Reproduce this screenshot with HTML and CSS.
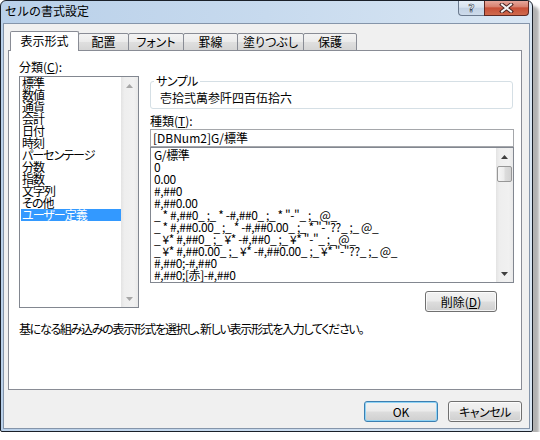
FILE: index.html
```html
<!DOCTYPE html>
<html lang="ja">
<head>
<meta charset="utf-8">
<title>セルの書式設定</title>
<link rel="stylesheet" href="styles.css">
</head>
<body>
<div class="window">
  <div class="titlebar">
    <div class="title">セルの書式設定</div>
    <div class="caption">
      <div class="cap help"><span>?</span></div>
      <div class="cap close">
        <svg width="15" height="10" viewBox="0 0 15 10"><path d="M3 1.5 L12 8.5 M12 1.5 L3 8.5" stroke="#4a2320" stroke-width="4" stroke-linecap="square"/><path d="M3 1.5 L12 8.5 M12 1.5 L3 8.5" stroke="#f4f4f4" stroke-width="2" stroke-linecap="square"/></svg>
      </div>
    </div>
  </div>
  <div class="client">
    <div class="tabs">
      <div class="tab sel">表示形式</div>
      <div class="tab t-haichi">配置</div>
      <div class="tab t-font">フォント</div>
      <div class="tab t-keisen">罫線</div>
      <div class="tab t-nuri">塗りつぶし</div>
      <div class="tab t-hogo">保護</div>
    </div>
    <div class="panel">
      <div class="main">
        <div class="left">
          <div class="label">分類(<u>C</u>):</div>
          <div class="listbox cat">
            <div class="items">
              <div class="item">標準</div>
              <div class="item">数値</div>
              <div class="item">通貨</div>
              <div class="item">会計</div>
              <div class="item">日付</div>
              <div class="item">時刻</div>
              <div class="item">パーセンテージ</div>
              <div class="item">分数</div>
              <div class="item">指数</div>
              <div class="item">文字列</div>
              <div class="item">その他</div>
              <div class="item selected">ユーザー定義</div>
            </div>
            <div class="vscroll disabled">
              <div class="arrow"><svg width="7" height="4" viewBox="0 0 7 4"><polygon points="3.5,0 7,4 0,4"/></svg></div>
              <div class="track"></div>
              <div class="arrow"><svg width="7" height="4" viewBox="0 0 7 4"><polygon points="0,0 7,0 3.5,4"/></svg></div>
            </div>
          </div>
        </div>
        <div class="right">
          <fieldset class="group">
            <legend>サンプル</legend>
            <div class="sample">壱拾弐萬参阡四百伍拾六</div>
          </fieldset>
          <div class="label type-label">種類(<u>T</u>):</div>
          <div class="input">[DBNum2]G/標準</div>
          <div class="listbox fmt">
            <div class="items">
              <div class="item">G/標準</div>
              <div class="item">0</div>
              <div class="item">0.00</div>
              <div class="item">#,##0</div>
              <div class="item">#,##0.00</div>
              <div class="item">_ * #,##0_ ;_ * -#,##0_ ;_ * "-"_ ;_ @_</div>
              <div class="item">_ * #,##0.00_ ;_ * -#,##0.00_ ;_ * "-"??_ ;_ @_</div>
              <div class="item">_ ¥* #,##0_ ;_ ¥* -#,##0_ ;_ ¥* "-"_ ;_ @_</div>
              <div class="item">_ ¥* #,##0.00_ ;_ ¥* -#,##0.00_ ;_ ¥* "-"??_ ;_ @_</div>
              <div class="item">#,##0;-#,##0</div>
              <div class="item">#,##0;[赤]-#,##0</div>
            </div>
            <div class="vscroll">
              <div class="arrow"><svg width="7" height="4" viewBox="0 0 7 4"><polygon points="3.5,0 7,4 0,4"/></svg></div>
              <div class="track"><div class="thumb"></div></div>
              <div class="arrow"><svg width="7" height="4" viewBox="0 0 7 4"><polygon points="0,0 7,0 3.5,4"/></svg></div>
            </div>
          </div>
          <div class="del-row"><div class="btn del">削除(<u>D</u>)</div></div>
        </div>
      </div>
      <div class="desc">基になる組み込みの表示形式を選択し、新しい表示形式を入力してください。</div>
    </div>
    <div class="buttons">
      <div class="btn ok">OK</div>
      <div class="btn cancel">キャンセル</div>
    </div>
  </div>
</div>
</body>
</html>
```

FILE: styles.css
```css
* { box-sizing: border-box; }
html, body { margin: 0; padding: 0; background: #ffffff; }
body {
  font-family: "Noto Sans CJK JP", "Noto Sans", sans-serif;
  font-size: 12px;
  color: #000;
  font-feature-settings: "palt";
}

.window {
  width: 533px;
  height: 432px;
  border: 1px solid #1a2029;
  border-radius: 6px 6px 2px 2px;
  background: linear-gradient(to right, #b9d0e9 0%, #c7daee 50%, #d9e6f3 100%);
  box-shadow: 6px 6px 3px rgba(0, 0, 0, 0.3);
  display: flex;
  flex-direction: column;
}

.titlebar {
  height: 22px;
  display: flex;
  justify-content: space-between;
  align-items: flex-start;
  padding: 0 3px 0 4px;
}
.title {
  line-height: 20px;
  font-feature-settings: normal;
  color: #000;
}
.caption { display: flex; }
.cap {
  height: 15px;
  display: flex;
  align-items: center;
  justify-content: center;
}
.help {
  width: 26px;
  border: 1px solid #6b7a8e;
  border-top: none;
  border-right: none;
  border-radius: 0 0 0 4px;
  background: linear-gradient(to bottom, #e6eef7 0%, #d8e3ef 45%, #c3d2e4 50%, #cddbeb 100%);
}
.help span {
  font-family: "DejaVu Sans", sans-serif;
  font-weight: bold;
  font-size: 11px;
  line-height: 11px;
  color: #f4f6f8;
  -webkit-text-stroke: 0.6px #3a4656;
  margin-top: 1px;
}
.close {
  width: 45px;
  border: 1px solid #5e2822;
  border-top: none;
  border-radius: 0 0 4px 0;
  background: linear-gradient(to bottom, #e7a79c 0%, #d88270 40%, #c84f37 50%, #cf6a4d 100%);
}

.client {
  flex: 1;
  margin: 0 2px 2px 2px;
  border: 1px solid #8595aa;
  background: #f0f0f0;
  padding: 7px 7px 6px 4px;
  display: flex;
  flex-direction: column;
}

.tabs {
  display: flex;
  align-items: flex-end;
  height: 20px;
  margin: 0 0 -1px 2px;
  position: relative;
  z-index: 1;
}
.tab {
  height: 18px;
  border: 1px solid #898c95;
  border-radius: 2px 2px 0 0;
  margin-left: -1px;
  background: linear-gradient(to bottom, #f3f3f3 0%, #ebebeb 48%, #dfdfdf 52%, #d5d5d5 100%);
  text-align: center;
  line-height: 16px;
  white-space: nowrap;
}
.tab.sel {
  height: 20px;
  width: 69px;
  margin-left: 0;
  border-bottom: none;
  background: #ffffff;
  line-height: 18px;
  position: relative;
  z-index: 2;
}
.t-haichi { width: 51px; }
.t-font { width: 56px; }
.t-keisen { width: 55px; }
.t-nuri { width: 67px; }
.t-hogo { width: 54px; }

.panel {
  height: 340px;
  border: 1px solid #898c95;
  background: #ffffff;
  padding: 7px 7px 0 10px;
}
.main {
  display: flex;
  gap: 11px;
  align-items: flex-start;
}
.left { width: 120px; }
.right { width: 364px; }

.label {
  height: 18px;
  line-height: 18px;
  white-space: nowrap;
}

.listbox {
  border: 1px solid #828790;
  background: #fff;
  display: flex;
  padding: 0 0 0 1px;
}
.listbox .items {
  flex: 1;
  min-width: 0;
  overflow: hidden;
}
.item {
  height: 12px;
  line-height: 12px;
  padding-left: 1px;
  white-space: nowrap;
  letter-spacing: -1px;
}
.fmt .item { letter-spacing: -0.4px; }
.item.selected {
  background: #3399ff;
  color: #ffffff;
}
.cat { height: 232px; }
.fmt { height: 136px; padding-left: 2px; }
.fmt .items { padding-top: 1px; }

.vscroll {
  width: 17px;
  flex: none;
  display: flex;
  flex-direction: column;
  background: linear-gradient(to right, #e3e3e3 0%, #eeeeee 20%, #f1f1f1 75%, #e9e9e9 100%);
}
.arrow {
  height: 17px;
  display: flex;
  align-items: center;
  justify-content: center;
  flex: none;
}
.arrow svg { fill: #3f3f3f; }
.vscroll.disabled .arrow svg { fill: #a6a6a6; }
.track { flex: 1; }
.thumb {
  height: 16px;
  margin: 1px 1px 0 1px;
  border: 1px solid #979797;
  border-radius: 2px;
  background: linear-gradient(to right, #f6f6f6 0%, #ececec 45%, #dcdcdc 55%, #d2d2d2 100%);
}

.group {
  margin: 16px 1px 0 0;
  padding: 3px 8px 3px 9px;
  border: 1px solid #d5dfe5;
  border-radius: 3px;
  min-width: 0;
}
.group legend {
  margin-left: -6px;
  padding: 0 2px;
  line-height: 14px;
  letter-spacing: -0.5px;
}
.sample {
  line-height: 14px;
  white-space: nowrap;
}
.type-label { margin-top: 4px; height: 16px; line-height: 16px; }
.input {
  height: 18px;
  border: 1px solid #a5a7ab;
  padding-left: 2px;
  line-height: 16px;
  white-space: nowrap;
}

.del-row {
  margin-top: 8px;
  display: flex;
  justify-content: flex-end;
  padding-right: 17px;
}

.btn {
  height: 21px;
  border: 1px solid #707070;
  border-radius: 3px;
  background: linear-gradient(to bottom, #f2f2f2 0%, #ebebeb 48%, #dddddd 52%, #cfcfcf 100%);
  box-shadow: inset 0 0 0 1px rgba(255, 255, 255, 0.75);
  display: flex;
  align-items: center;
  justify-content: center;
  line-height: 14px;
  white-space: nowrap;
}
.del { width: 72px; }

.desc {
  margin-top: 10px;
  line-height: 14px;
  white-space: nowrap;
  letter-spacing: -1.3px;
}

.buttons {
  margin-top: 11px;
  display: flex;
  justify-content: flex-end;
  gap: 10px;
}
.ok, .cancel { width: 74px; }
.cancel { letter-spacing: -0.5px; }
.ok {
  border-color: #3c7fb1;
  box-shadow: inset 0 0 0 1px #8fd3f5;
}
```
